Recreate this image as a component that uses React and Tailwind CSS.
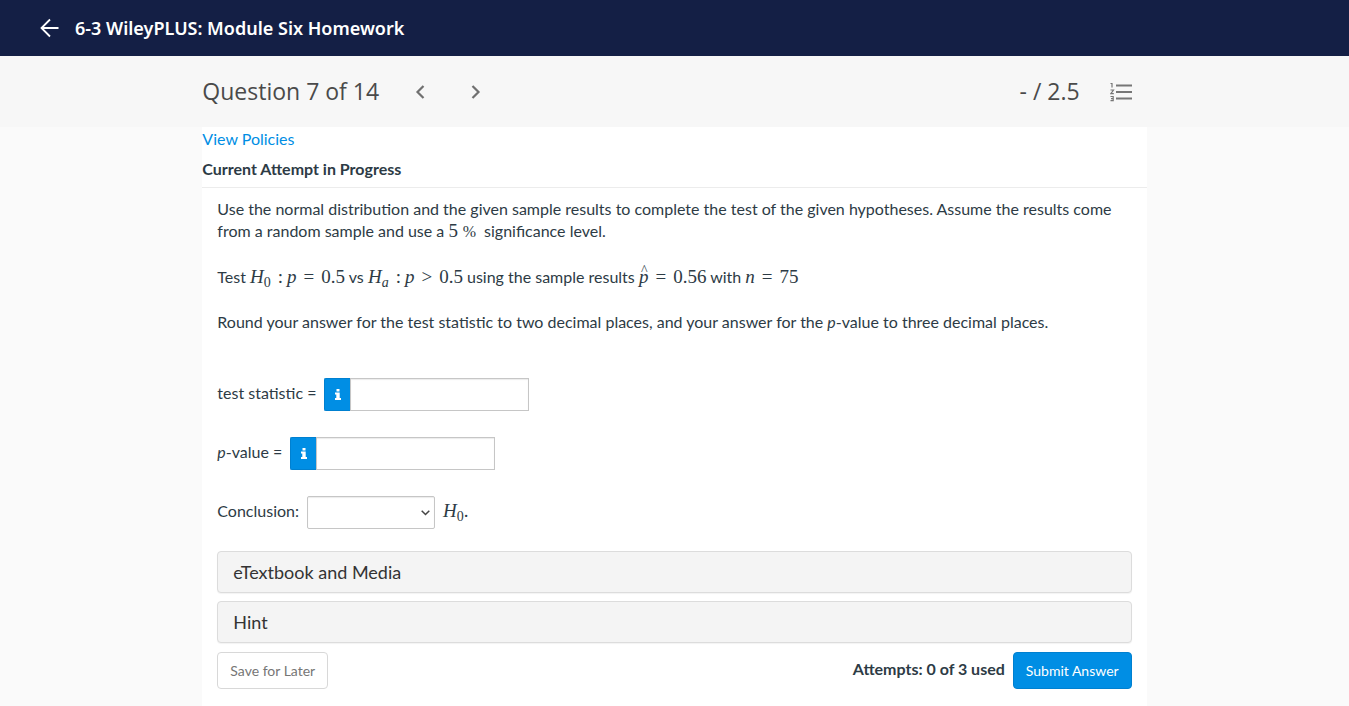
import React, { useState } from 'react';

// Inline math fragment
const MathText = ({ children, className = '' }) => (
    <span className={`whitespace-nowrap font-['Liberation_Serif',serif] text-[19px] leading-none ${className}`}>{children}</span>
);

// Relation sign with the usual space around it
const Rel = ({ children }) => <span className="mx-[7px]">{children}</span>;

// Colon between a hypothesis and its statement
const Colon = () => <span className="ml-[7px] mr-1">:</span>;

// Hypothesis symbol, H with a subscript
const Hyp = ({ sub, italic }) => (
    <>
        <i>H</i>
        <sub className={`text-sm ${italic ? 'italic' : ''}`}>{sub}</sub>
    </>
);

const InfoInput = ({ id, value, onChange }) => (
    <span className="flex h-[33px]">
        <button
            type="button"
            aria-label="Show answer format"
            className="flex w-[26px] items-center justify-center rounded-l-xs border border-r-0 border-[#0080d0] bg-[#008ee4] text-white"
        >
            <svg width="6" height="11" viewBox="0 0 6 11" fill="currentColor" aria-hidden="true">
                <path d="M1.500 0h3v2.500h-3zM0 3.500h4.700V9H6v2H0V9h1.300V5.500H0z" />
            </svg>
        </button>
        <input
            id={id}
            type="text"
            value={value}
            onChange={(e) => onChange(e.target.value)}
            className="w-[179px] border border-[#c6c6c6] bg-white px-2 shadow-[inset_0_1px_1px_rgba(0,0,0,0.08)] outline-none"
        />
    </span>
);

const Panel = ({ title }) => (
    <button
        type="button"
        className="block h-[42px] w-full rounded-sm border border-[#dcdcdc] bg-[#f4f4f4] px-[15px] text-left text-lg text-[#333] shadow-[0_1px_1px_rgba(0,0,0,0.05)]"
    >
        {title}
    </button>
);

const TopBar = () => (
    <header className="flex h-14 items-center gap-4 bg-[#141f45] px-10 font-['Noto_Sans',sans-serif] text-white">
        <a href="#back" aria-label="Back">
            <svg width="19" height="20" viewBox="0 0 19 20" fill="none" stroke="currentColor" strokeWidth="1.8" aria-hidden="true">
                <path d="M18.500 10H2M10 1.500L1.500 10l8.500 8.500" />
            </svg>
        </a>
        <h1 className="text-lg font-semibold">6-3 WileyPLUS: Module Six Homework</h1>
    </header>
);

const QuestionBar = () => (
    <div className="bg-[#f7f7f7] font-['Open_Sans',sans-serif] text-[#4a4a4a]">
        <div className="mx-auto flex h-[71px] w-[70%] items-center justify-between pr-[15px]">
            <div className="flex items-center">
                <h2 className="text-[23px]">Question 7 of 14</h2>
                <button type="button" aria-label="Previous question" className="ml-9 text-[#707070]">
                    <svg width="10" height="14" viewBox="0 0 10 14" fill="none" stroke="currentColor" strokeWidth="2.2" aria-hidden="true">
                        <path d="M8.500 1L2.500 7l6 6" />
                    </svg>
                </button>
                <button type="button" aria-label="Next question" className="ml-[46px] text-[#707070]">
                    <svg width="10" height="14" viewBox="0 0 10 14" fill="none" stroke="currentColor" strokeWidth="2.2" aria-hidden="true">
                        <path d="M1.500 1l6 6-6 6" />
                    </svg>
                </button>
            </div>
            <div className="flex items-center gap-[30px]">
                <span className="text-[23px]">- / 2.5</span>
                <button type="button" aria-label="Question list" className="text-[#767676]">
                    <svg width="22" height="20" viewBox="0 0 22 20" fill="none" stroke="currentColor" aria-hidden="true">
                        <path strokeWidth="2" d="M6 3.500h16M6 10h16M6 16.500h16" />
                        <path strokeWidth="1.2" d="M.5 1.500h1.500v4M.5 8h3L.8 11.700h3M.5 14.500h2.700v4.200H.5M1 16.600h2" />
                    </svg>
                </button>
            </div>
        </div>
    </div>
);

const App = () => {
    const [statistic, setStatistic] = useState('');
    const [pValue, setPValue] = useState('');
    const [conclusion, setConclusion] = useState('');

    return (
        <div className="flex min-h-screen flex-col bg-[#fafafa] font-['Lato',sans-serif] text-base text-[#2d3b45]">
            <TopBar />
            <QuestionBar />
            <main className="mx-auto w-[70%] grow bg-white pb-[17px]">
                <div className="border-b border-[#ececec] pb-1.5">
                    <a href="#policies" className="block text-[#008ee4]">View Policies</a>
                    <h3 className="mt-1.5 font-bold">Current Attempt in Progress</h3>
                </div>

                <form className="px-[15px] pt-2.5" onSubmit={(e) => e.preventDefault()}>
                    <p className="leading-[22px]">
                        Use the normal distribution and the given sample results to complete the test of the given
                        hypotheses. Assume the results come from a random sample and use a{' '}
                        <MathText className="mr-1">5 <span className="text-base">%</span></MathText> significance level.
                    </p>
                    <p className="mt-[22px] leading-[22px]">
                        Test <MathText><Hyp sub="0" /><Colon /><i>p</i><Rel>=</Rel>0.5</MathText> vs{' '}
                        <MathText><Hyp sub="a" italic /><Colon /><i>p</i><Rel>&gt;</Rel>0.5</MathText> using the sample results{' '}
                        <MathText>
                            <span className="relative">
                                <i>p</i>
                                <span className="absolute -top-0.5 left-0.5 text-sm leading-none">^</span>
                            </span>
                            <Rel>=</Rel>0.56
                        </MathText>{' '}
                        with <MathText><i>n</i><Rel>=</Rel>75</MathText>
                    </p>
                    <p className="mt-[22px] leading-[22px]">
                        Round your answer for the test statistic to two decimal places, and your answer for the <i>p</i>-value to
                        three decimal places.
                    </p>

                    <div className="mt-[45px] flex flex-col gap-[26px]">
                        <div className="flex gap-2">
                            <label htmlFor="statistic" className="leading-[30px]">test statistic =</label>
                            <InfoInput id="statistic" value={statistic} onChange={setStatistic} />
                        </div>
                        <div className="flex gap-2">
                            <label htmlFor="p-value" className="leading-[30px]"><i>p</i>-value =</label>
                            <InfoInput id="p-value" value={pValue} onChange={setPValue} />
                        </div>
                        <div className="flex gap-2">
                            <label htmlFor="conclusion" className="leading-[30px]">Conclusion:</label>
                            <span className="relative">
                                <select
                                    id="conclusion"
                                    value={conclusion}
                                    onChange={(e) => setConclusion(e.target.value)}
                                    className="block h-[33px] w-32 appearance-none rounded-xs border border-[#c6c6c6] bg-white px-2 shadow-[inset_0_1px_1px_rgba(0,0,0,0.08)]"
                                >
                                    <option value=""></option>
                                    <option value="reject">Reject</option>
                                    <option value="not-reject">Do not reject</option>
                                </select>
                                <svg className="pointer-events-none absolute right-[5px] top-[14px] text-[#444]" width="9" height="6" viewBox="0 0 9 6" fill="none" stroke="currentColor" strokeWidth="1.5" aria-hidden="true">
                                    <path d="M.7.7l3.800 3.800L8.300.7" />
                                </svg>
                            </span>
                            <span className="leading-[30px]"><MathText><Hyp sub="0" />.</MathText></span>
                        </div>
                    </div>

                    <div className="mt-[22px] flex flex-col gap-2">
                        <Panel title="eTextbook and Media" />
                        <Panel title="Hint" />
                    </div>

                    <div className="mt-[9px] flex justify-between">
                        <button type="button" className="h-[37px] rounded-sm border border-[#d8d8d8] bg-white px-3 text-sm text-[#767676]">
                            Save for Later
                        </button>
                        <div className="flex gap-2">
                            <span className="font-bold leading-[34px]">Attempts: 0 of 3 used</span>
                            <button type="submit" className="h-[37px] rounded-sm border border-[#0080d0] bg-[#008ee4] px-3 text-sm text-white">
                                Submit Answer
                            </button>
                        </div>
                    </div>
                </form>
            </main>
        </div>
    );
};

export default App;
